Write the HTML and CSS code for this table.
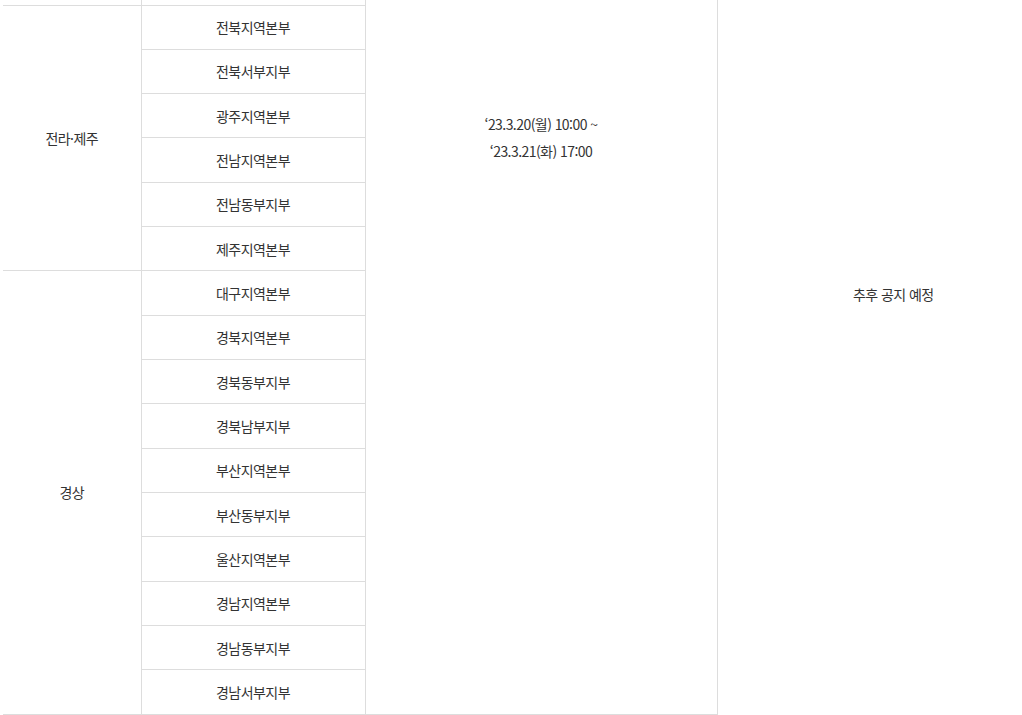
FILE: index.html
```html
<!DOCTYPE html>
<html lang="ko">
<head>
  <meta charset="UTF-8" />
  <meta name="viewport" content="width=device-width, initial-scale=1.0"/>
  <title>지역본부별 일정</title>
  <link rel="stylesheet" href="styles.css">
</head>
<body>
  <div class="wrap">
    <table class="schedule">
      <colgroup>
        <col class="col-area">
        <col class="col-branch">
        <col class="col-date">
        <col class="col-notice">
      </colgroup>
      <tbody>
        <tr class="tail">
          <td></td>
          <td></td>
          <td class="date" rowspan="17">‘23.3.20(월) 10:00 ~<br>‘23.3.21(화) 17:00</td>
          <td class="notice" rowspan="17">추후 공지 예정</td>
        </tr>
        <tr>
          <td class="area" rowspan="6">전라·제주</td>
          <td>전북지역본부</td>
        </tr>
        <tr><td>전북서부지부</td></tr>
        <tr><td>광주지역본부</td></tr>
        <tr><td>전남지역본부</td></tr>
        <tr><td>전남동부지부</td></tr>
        <tr><td>제주지역본부</td></tr>
        <tr>
          <td class="area" rowspan="10">경상</td>
          <td>대구지역본부</td>
        </tr>
        <tr><td>경북지역본부</td></tr>
        <tr><td>경북동부지부</td></tr>
        <tr><td>경북남부지부</td></tr>
        <tr><td>부산지역본부</td></tr>
        <tr><td>부산동부지부</td></tr>
        <tr><td>울산지역본부</td></tr>
        <tr><td>경남지역본부</td></tr>
        <tr><td>경남동부지부</td></tr>
        <tr><td>경남서부지부</td></tr>
      </tbody>
    </table>
  </div>
</body>
</html>
```

FILE: styles.css
```css
body {
  margin: 0;
  background-color: #fff;
  font-family: "Noto Sans CJK KR", "Noto Sans", sans-serif;
  color: #333;
  overflow: hidden;
}

.wrap {
  padding-left: 3px;
  overflow: hidden;
}

.schedule {
  width: 1066px;
  table-layout: fixed;
  border-collapse: collapse;
  font-size: 14px;
  letter-spacing: -0.04em;
}

.col-area { width: 138px; }
.col-branch { width: 224px; }
.col-date { width: 352px; }
.col-notice { width: 352px; }

.schedule td {
  height: 44.32px;
  padding: 0 10px;
  border: 1px solid #dddddd;
  border-left: none;
  text-align: center;
  vertical-align: middle;
  line-height: 22px;
  box-sizing: border-box;
}

.schedule .tail td {
  height: 5px;
  border-top: none;
}

.schedule td.date {
  vertical-align: top;
  padding-top: 111px;
  line-height: 27px;
  border-top: none;
}

.schedule td.notice {
  vertical-align: top;
  padding-top: 283px;
  border-top: none;
  border-bottom: none;
  border-right: none;
}
```
